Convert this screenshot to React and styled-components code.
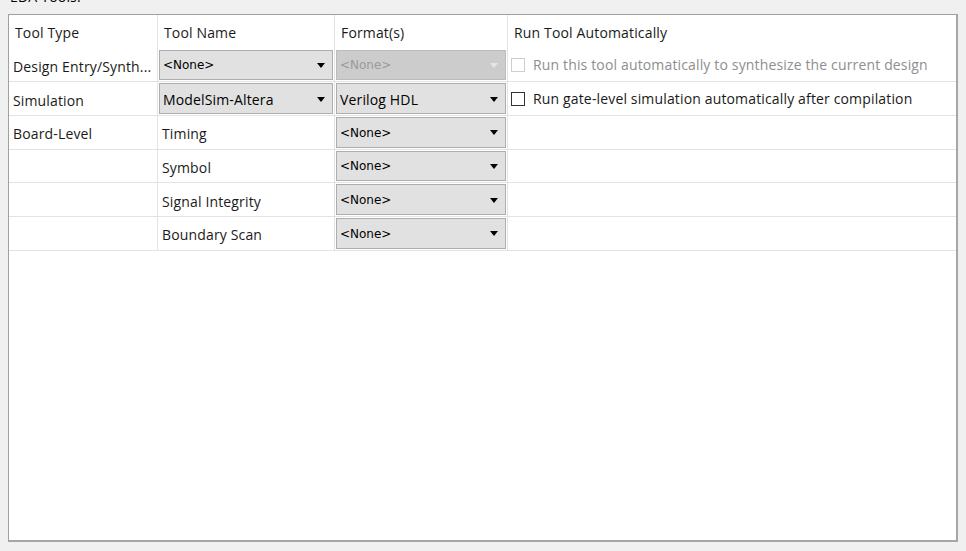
import React from "react";
import styled, { createGlobalStyle } from "styled-components";

const Global = createGlobalStyle`
  html, body { margin: 0; padding: 0; background: #f0f0f0; }
  body { width: 966px; height: 551px; overflow: hidden; font-family: "Open Sans", "Noto Sans", sans-serif; }
`;

const Page = styled.div`
  padding: 0 8px 0 8px;
  height: 551px;
  box-sizing: border-box;
`;

const Caption = styled.div`
  font-size: 14px;
  letter-spacing: 0.2px;
  color: #000;
  height: 14px;
  line-height: 14px;
  margin-top: -10px;
  padding-left: 2px;
  margin-bottom: 10px;
`;

const Frame = styled.div`
  width: 950px;
  height: 528px;
  box-sizing: border-box;
  background: #fff;
  border: 1px solid #a0a0a0;
  border-right: 2px solid #a6a6aa;
  border-bottom: 2px solid #a6a6aa;
`;

const Grid = styled.div`
  display: grid;
  grid-template-columns: 149px 177px 173px 1fr;
  grid-auto-rows: 33.67px;
`;

const Cell = styled.div`
  box-sizing: border-box;
  display: flex;
  align-items: center;
  padding: ${(p) => (p.$head ? "2px 0 0 6px" : p.$pad ? "3px 0 0 4px" : "1px")};
  border-right: ${(p) => (p.$last ? "none" : "1px solid #e3e3e3")};
  border-bottom: ${(p) => (p.$head ? "none" : "1px solid #e3e3e3")};
  font-size: 14px;
  letter-spacing: 0.15px;
  color: #1a1a1a;
  white-space: nowrap;
  overflow: hidden;
`;

const Combo = styled.div`
  flex: 1;
  align-self: stretch;
  display: flex;
  align-items: center;
  justify-content: space-between;
  box-sizing: border-box;
  padding: 1px 7px 0 3px;
  background: ${(p) => (p.$disabled ? "#cccccc" : "#e1e1e1")};
  border: 1px solid ${(p) => (p.$disabled ? "#bcbcbc" : "#adadad")};
  color: ${(p) => (p.$disabled ? "#9a9a9a" : "#000")};
  font-family: ${(p) => (p.$plain ? '"DejaVu Sans", sans-serif' : '"Open Sans", sans-serif')};
  font-size: ${(p) => (p.$plain ? "12px" : "14px")};
  letter-spacing: ${(p) => (p.$plain ? "0" : "0.15px")};
`;

const Arrow = styled.span`
  width: 0;
  height: 0;
  border-left: 4px solid transparent;
  border-right: 4px solid transparent;
  border-top: 5px solid ${(p) => (p.$disabled ? "#e6e6e6" : "#000")};
`;

const CheckWrap = styled.label`
  display: flex;
  align-items: center;
  gap: 8px;
  padding-left: 2px;
  font-size: 14px;
  letter-spacing: 0.15px;
  color: ${(p) => (p.$disabled ? "#8e8e8e" : "#1a1a1a")};
`;

const Box = styled.span`
  width: 14px;
  height: 14px;
  box-sizing: border-box;
  background: #fff;
  border: 1px solid ${(p) => (p.$disabled ? "#cfcfcf" : "#333")};
`;

const rows = [
  {
    type: "Design Entry/Synth...",
    name: { combo: "<None>", plain: true },
    fmt: { combo: "<None>", plain: true, disabled: true },
    run: { text: "Run this tool automatically to synthesize the current design", disabled: true },
  },
  {
    type: "Simulation",
    name: { combo: "ModelSim-Altera" },
    fmt: { combo: "Verilog HDL" },
    run: { text: "Run gate-level simulation automatically after compilation" },
  },
  { type: "Board-Level", name: { text: "Timing" }, fmt: { combo: "<None>", plain: true } },
  { type: "", name: { text: "Symbol" }, fmt: { combo: "<None>", plain: true } },
  { type: "", name: { text: "Signal Integrity" }, fmt: { combo: "<None>", plain: true } },
  { type: "", name: { text: "Boundary Scan" }, fmt: { combo: "<None>", plain: true } },
];

function ValueCell({ v }) {
  if (v.combo) {
    return (
      <Cell>
        <Combo $disabled={v.disabled} $plain={v.plain}>
          <span>{v.combo}</span>
          <Arrow $disabled={v.disabled} />
        </Combo>
      </Cell>
    );
  }
  return <Cell $pad>{v.text}</Cell>;
}

export default function App() {
  return (
    <>
      <Global />
      <Page>
        <Caption>EDA Tools:</Caption>
        <Frame>
          <Grid>
            <Cell $pad $head>Tool Type</Cell>
            <Cell $pad $head>Tool Name</Cell>
            <Cell $pad $head>Format(s)</Cell>
            <Cell $pad $head $last>Run Tool Automatically</Cell>
            {rows.map((r, i) => (
              <React.Fragment key={i}>
                <Cell $pad>{r.type}</Cell>
                <ValueCell v={r.name} />
                <ValueCell v={r.fmt} />
                <Cell $last>
                  {r.run && (
                    <CheckWrap $disabled={r.run.disabled}>
                      <Box $disabled={r.run.disabled} />
                      {r.run.text}
                    </CheckWrap>
                  )}
                </Cell>
              </React.Fragment>
            ))}
          </Grid>
        </Frame>
      </Page>
    </>
  );
}
